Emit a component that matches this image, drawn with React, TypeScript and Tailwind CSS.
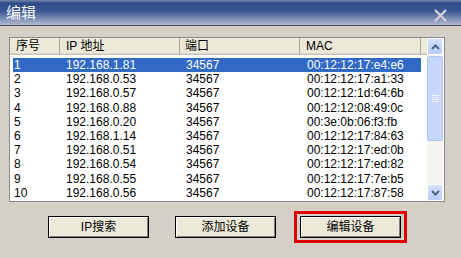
import React from 'react';

const rows = [
  ['1', '192.168.1.81', '34567', '00:12:12:17:e4:e6'],
  ['2', '192.168.0.53', '34567', '00:12:12:17:a1:33'],
  ['3', '192.168.0.57', '34567', '00:12:12:1d:64:6b'],
  ['4', '192.168.0.88', '34567', '00:12:12:08:49:0c'],
  ['5', '192.168.0.20', '34567', '00:3e:0b:06:f3:fb'],
  ['6', '192.168.1.14', '34567', '00:12:12:17:84:63'],
  ['7', '192.168.0.51', '34567', '00:12:12:17:ed:0b'],
  ['8', '192.168.0.54', '34567', '00:12:12:17:ed:82'],
  ['9', '192.168.0.55', '34567', '00:12:12:17:7e:b5'],
  ['10', '192.168.0.56', '34567', '00:12:12:17:87:58'],
];

const font = "font-['Liberation_Sans','Noto_Sans_CJK_SC',sans-serif]";

function Chevron({ up }: { up?: boolean }) {
  return (
    <svg width="9" height="6" viewBox="0 0 9 6">
      <path
        d={up ? 'M1 5 L4.5 1.5 L8 5' : 'M1 1 L4.5 4.5 L8 1'}
        fill="none"
        stroke="#4d6185"
        strokeWidth="2"
      />
    </svg>
  );
}

function ScrollButton({ up }: { up?: boolean }) {
  return (
    <div className="h-[17px] w-[16px] rounded-[2px] border border-white bg-gradient-to-b from-[#d6e2fc] to-[#b7cbf7] flex items-center justify-center">
      <Chevron up={up} />
    </div>
  );
}

function Button({ label }: { label: string }) {
  return (
    <button className="w-[101px] h-[22px] bg-[#ece9d8] border border-black shadow-[inset_1px_1px_0_#fff,inset_-1px_-1px_0_#808080] text-[12px] text-black flex items-center justify-center">
      {label}
    </button>
  );
}

export default function App() {
  return (
    <div className={`w-[461px] h-[258px] bg-[#d4d0c8] flex flex-col overflow-hidden ${font}`}>
      {/* Title bar */}
      <div className="h-[26px] border-b border-[#4a4a4a] bg-[linear-gradient(to_bottom,#7586ab_0%,#2f4b86_12%,#3c5891_45%,#7d8fb5_75%,#b0bad1_100%)] flex items-center justify-between pl-[6px] pr-[14px]">
        <span className="text-white text-[15px] leading-none">编辑</span>
        <svg width="13" height="13" viewBox="0 0 13 13" className="mt-[5px]">
          <path d="M1 1 L12 12 M12 1 L1 12" stroke="#d0d3dc" strokeWidth="2.4" />
        </svg>
      </div>

      {/* List */}
      <div className="mt-[11px] ml-[9px] w-[436px] h-[165px] border border-[#8a8a8a] bg-white flex">
        <div className="flex-1 flex flex-col text-[12px] text-black">
          <div className="h-[17px] flex bg-[#ece9d8] border-b border-[#c8c5b5] shadow-[inset_0_-1px_0_#dad7c7]">
            <div className="w-[50px] pl-[6px] border-r border-[#aca899] flex items-center">序号</div>
            <div className="w-[120px] pl-[6px] border-r border-[#aca899] flex items-center">IP 地址</div>
            <div className="w-[120px] pl-[5px] border-r border-[#aca899] flex items-center">端口</div>
            <div className="w-[121px] pl-[6px] border-r border-[#aca899] flex items-center">MAC</div>
          </div>
          <div className="pt-[3px] flex flex-col">
            {rows.map((r, i) => (
              <div
                key={r[0]}
                className={`h-[14.2px] flex items-center leading-none ${i === 0 ? 'bg-[#316ac5] text-white' : ''} ml-[3px] w-[408px]`}
              >
                <div className="w-[53px] pl-[1px]">{r[0]}</div>
                <div className="w-[120px]">{r[1]}</div>
                <div className="w-[121px]">{r[2]}</div>
                <div className="w-[114px]">{r[3]}</div>
              </div>
            ))}
          </div>
        </div>
        {/* Scrollbar */}
        <div className="w-[16px] mr-[1px] flex flex-col bg-[#f4f3ee]">
          <ScrollButton up />
          <div className="flex-1 pt-[1px]">
            <div className="h-[85px] rounded-[2px] border border-[#b2c6f3] bg-[#c7d7fc] flex flex-col items-center justify-center gap-[1px]">
              {[0, 1, 2, 3].map((k) => (
                <div key={k} className="w-[7px] h-[1px] bg-[#eef3fe]" />
              ))}
            </div>
          </div>
          <ScrollButton />
        </div>
      </div>

      {/* Buttons */}
      <div className="mt-[9px] flex items-center">
        <div className="ml-[48px]">
          <Button label="IP搜索" />
        </div>
        <div className="ml-[26px]">
          <Button label="添加设备" />
        </div>
        <div className="ml-[18px] border-[3px] border-[#e00000] pt-[2px] pb-[2px] px-[3px]">
          <Button label="编辑设备" />
        </div>
      </div>
    </div>
  );
}
